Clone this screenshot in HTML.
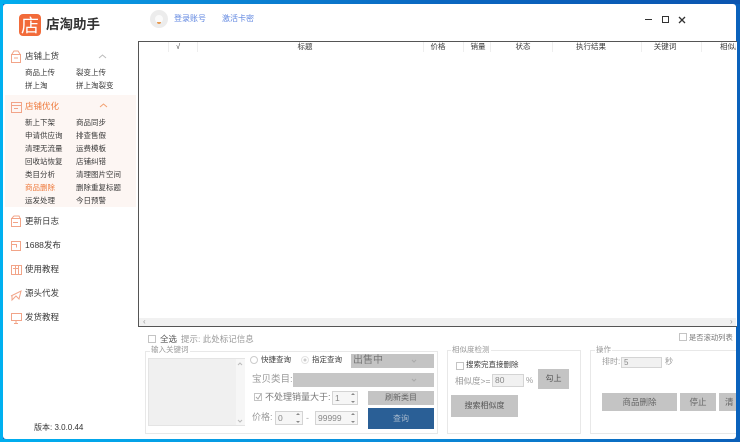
<!DOCTYPE html>
<html><head><meta charset="utf-8"><style>
html,body{margin:0;padding:0;width:740px;height:442px;overflow:hidden;background:#0a62bc}
body{position:relative;font-family:"Liberation Sans","Noto Sans CJK SC",sans-serif;color:#333}
.a{position:absolute;white-space:nowrap}
.t{position:absolute;white-space:nowrap;font-size:7.5px;line-height:12px;color:#3a3a3a}
.m{position:absolute;white-space:nowrap;font-size:8.5px;line-height:14px;color:#3a3a3a}
.g{position:absolute;white-space:nowrap;font-size:9px;line-height:14px;color:#999}
.h{position:absolute;white-space:nowrap;font-size:7.5px;line-height:12px;color:#3a3a3a;top:41px;transform:translateX(-50%)}
.s{position:absolute;top:42px;width:1px;height:10px;background:#eee}
.box{position:absolute;border:1px solid #e8e8e8;box-sizing:border-box}
.btn{position:absolute;background:#c4c4c4;color:#666;font-size:8.5px;text-align:center;box-sizing:border-box}
.inp{position:absolute;background:#f1f1f1;border:1px solid #d4d4d4;box-sizing:border-box;font-size:8.5px;color:#888;padding-left:2px}
.ck{position:absolute;width:8px;height:8px;border:1px solid #c4c4c4;background:#fff;box-sizing:border-box}
svg{position:absolute;overflow:visible}
</style></head><body>
<div class="a" style="left:0;top:0;width:740px;height:4px;background:linear-gradient(90deg,#00aeef 0,#0a8fdc 20%,#0a66c0 60%,#0b55b0 100%)"></div>
<div class="a" style="left:0;top:0;width:3px;height:442px;background:#00b0f0"></div>
<div class="a" style="left:0;top:439px;width:740px;height:3px;background:linear-gradient(90deg,#00aeef 0,#0a8fdc 50%,#0b5fb8 100%)"></div>
<div class="a" style="left:3px;top:4px;width:733px;height:435px;background:#fff;border-radius:3px"></div>

<!-- Logo -->
<div class="a" style="left:19px;top:14px;width:22px;height:22px;border-radius:4px;background:#f26b3a"></div>
<div class="a" style="left:19px;top:14px;width:22px;height:22px;color:#fff;font-size:18px;line-height:22px;text-align:center;font-family:'Noto Sans CJK SC',sans-serif">店</div>
<div class="a" style="left:46px;top:15px;font-size:13.500px;line-height:20px;font-weight:bold;color:#333">店淘助手</div>

<!-- Sidebar -->
<div class="a" style="left:5px;top:95px;width:131px;height:112px;background:#fdf6f3"></div>
<svg style="left:0;top:0" width="138" height="340" fill="none" stroke="#f2a488" stroke-width="1">
<path d="M11.500 54.500h9v8h-9zM12 54l2-3h4l2 3M14 58h4"/>
<path d="M11.500 102.500h10v10h-10zM11.500 105.500h10M14 108.500h4"/>
<path d="M11.500 218.500h9v8h-9zM12 218l2-2h5l1 2M13 222.500h5"/>
<path d="M11.500 241.500h9v9h-9zM11.500 244.500h5v3"/>
<path d="M11.500 265.500h10v9h-10zM15.500 265.500v9M18.500 265.500v9M13 268.500h6"/>
<path d="M11 296l10-5-2 8-3-3-4 4v-4"/>
<path d="M11.500 313.500h10v7h-10zM14 323.500h4M16 320.500v3"/>
<path d="M99 58l3.500-3 3.500 3" stroke="#bbb"/>
<path d="M100 107l3.500-3 3.500 3" stroke="#f2a070"/>
</svg>
<div class="m" style="left:25px;top:49px">店铺上货</div>
<div class="t" style="left:25px;top:67px">商品上传</div><div class="t" style="left:76px;top:67px">裂变上传</div>
<div class="t" style="left:25px;top:80px">拼上淘</div><div class="t" style="left:76px;top:80px">拼上淘裂变</div>

<div class="m" style="left:25px;top:99px;color:#ee7a3c">店铺优化</div>
<div class="t" style="left:25px;top:117px">新上下架</div><div class="t" style="left:76px;top:117px">商品同步</div>
<div class="t" style="left:25px;top:130px">申请供应询</div><div class="t" style="left:76px;top:130px">排查售假</div>
<div class="t" style="left:25px;top:143px">清理无流量</div><div class="t" style="left:76px;top:143px">运费模板</div>
<div class="t" style="left:25px;top:156px">回收站恢复</div><div class="t" style="left:76px;top:156px">店铺纠错</div>
<div class="t" style="left:25px;top:169px">类目分析</div><div class="t" style="left:76px;top:169px">清理图片空间</div>
<div class="t" style="left:25px;top:182px;color:#ee7a3c">商品删除</div><div class="t" style="left:76px;top:182px">删除重复标题</div>
<div class="t" style="left:25px;top:195px">运发处理</div><div class="t" style="left:76px;top:195px">今日预警</div>

<div class="m" style="left:25px;top:214px">更新日志</div>
<div class="m" style="left:25px;top:238px">1688发布</div>
<div class="m" style="left:25px;top:262px">使用教程</div>
<div class="m" style="left:25px;top:286px">源头代发</div>
<div class="m" style="left:25px;top:310px">发货教程</div>
<div class="m" style="left:34px;top:421px;font-size:8px;color:#333">版本: 3.0.0.44</div>

<!-- Top bar -->
<div class="a" style="left:150px;top:10px;width:18px;height:18px;border-radius:50%;background:#ececec"></div>
<div class="a" style="left:155px;top:15px;width:8px;height:8px;border-radius:50%;background:#fafafa"></div>
<div class="a" style="left:157px;top:22px;width:4px;height:2px;background:#e89a50;border-radius:0 0 3px 3px"></div>
<div class="t" style="left:174px;top:13px;color:#5f86e0;font-size:8px">登录账号</div>
<div class="t" style="left:222px;top:13px;color:#5f86e0;font-size:8px">激活卡密</div>
<svg style="left:0;top:0" width="740" height="30" fill="none" stroke="#333" stroke-width="1">
<path d="M645 19.500h7"/>
<path d="M662.500 16.500h6v6h-6z"/>
<path d="M679 17l6 6M685 17l-6 6" stroke-width="1.300"/>
</svg>

<!-- Table -->
<div class="a" style="left:138px;top:41px;width:599px;height:286px;border:1px solid #555;border-right:0;box-sizing:border-box;background:#fff"></div>
<div class="s" style="left:168px"></div><div class="s" style="left:197px"></div><div class="s" style="left:423px"></div><div class="s" style="left:463px"></div><div class="s" style="left:490px"></div><div class="s" style="left:552px"></div><div class="s" style="left:641px"></div><div class="s" style="left:701px"></div>
<div class="h" style="left:178px">√</div>
<div class="h" style="left:305px">标题</div>
<div class="h" style="left:438px">价格</div>
<div class="h" style="left:478px">销量</div>
<div class="h" style="left:523px">状态</div>
<div class="h" style="left:591px">执行结果</div>
<div class="h" style="left:665px">关键词</div>
<div class="h" style="transform:none;left:720px;width:16px;overflow:hidden">相似度</div>
<div class="a" style="left:139px;top:318px;width:597px;height:8px;background:#f1f1f1"></div>
<div class="a" style="left:143px;top:317px;font-size:8px;line-height:10px;color:#999">‹</div>
<div class="a" style="left:730px;top:317px;font-size:8px;line-height:10px;color:#999">›</div>

<!-- Bottom -->
<div class="ck" style="left:148px;top:335px"></div>
<div class="a" style="left:160px;top:332px;font-size:8.500px;line-height:14px;color:#555">全选</div>
<div class="a" style="left:181px;top:332px;font-size:8.500px;line-height:14px;color:#999">提示: 此处标记信息</div>
<div class="ck" style="left:679px;top:333px"></div>
<div class="a" style="left:689px;top:331px;font-size:7.300px;line-height:14px;color:#777">是否滚动列表</div>

<div class="box" style="left:145px;top:351px;width:293px;height:83px"></div>
<div class="a" style="left:150px;top:344px;background:#fff;padding:0 1px;font-size:7.500px;line-height:12px;color:#999">输入关键词</div>
<div class="a" style="left:148px;top:358px;width:97px;height:68px;background:#f0f0f0;border:1px solid #e4e4e4;box-sizing:border-box"></div>
<div class="a" style="left:236px;top:359px;width:9px;height:66px;background:#f6f6f6"></div>
<svg style="left:0;top:0" width="740" height="442" fill="none" stroke="#bbb"><path d="M238 365l2-2 2 2M238 420l2 2 2-2"/>
<circle cx="254" cy="360" r="3.500" stroke="#ccc"/><circle cx="305" cy="360" r="3.500" stroke="#e4e4e4"/><circle cx="305" cy="360" r="1.500" fill="#ccc" stroke="none"/></svg>
<div class="a" style="left:261px;top:354px;font-size:7.500px;line-height:12px;color:#3a3a3a">快捷查询</div>
<div class="a" style="left:312px;top:354px;font-size:7.500px;line-height:12px;color:#3a3a3a">指定查询</div>
<div class="a" style="left:351px;top:354px;width:83px;height:14px;background:#c4c4c4;color:#777;font-size:10px;line-height:14px;padding-left:2px;box-sizing:border-box">出售中</div>
<div class="g" style="left:252px;top:373px;font-size:9.500px">宝贝类目:</div>
<div class="a" style="left:293px;top:373px;width:141px;height:14px;background:#c6c6c6"></div>
<div class="ck" style="left:254px;top:393px;background:none"></div>
<svg style="left:0;top:0" width="740" height="442" fill="none" stroke="#aaa"><path d="M256 397l2 2 3-5"/><path d="M412 360l2 2 2-2M412 379l2 2 2-2"/></svg>
<div class="a" style="left:265px;top:390px;font-size:9px;line-height:14px;color:#777">不处理销量大于:</div>
<div class="inp" style="left:332px;top:391px;width:26px;height:14px;line-height:12px;background:#f6f6f6">1</div>
<div class="g" style="left:252px;top:410px;font-size:9px">价格:</div>
<div class="inp" style="left:275px;top:411px;width:28px;height:14px;line-height:12px;background:#f6f6f6">0</div>
<div class="a" style="left:306px;top:411px;font-size:9px;line-height:14px;color:#aaa">-</div>
<div class="inp" style="left:315px;top:411px;width:43px;height:14px;line-height:12px;background:#f6f6f6">99999</div>
<svg style="left:0;top:0" width="740" height="442" fill="#888"><path d="M351 395l2-2 2 2zM351 401l2 2 2-2zM296 415l2-2 2 2zM296 421l2 2 2-2zM351 415l2-2 2 2zM351 421l2 2 2-2zM654 360l2-2 2 2zM654 365l2 2 2-2z"/></svg>
<div class="btn" style="left:368px;top:391px;width:66px;height:14px;line-height:14px;font-size:8px">刷新类目</div>
<div class="btn" style="left:368px;top:408px;width:66px;height:21px;line-height:21px;background:#2a5f96;color:#a6b8cc;font-size:8px">查询</div>

<div class="box" style="left:447px;top:350px;width:134px;height:84px"></div>
<div class="a" style="left:451px;top:344px;background:#fff;padding:0 1px;font-size:7.500px;line-height:12px;color:#999">相似度检测</div>
<div class="ck" style="left:456px;top:362px"></div>
<div class="a" style="left:466px;top:359px;font-size:7.500px;line-height:12px;color:#3a3a3a">搜索完直接删除</div>
<div class="g" style="left:455px;top:374px;font-size:8.500px">相似度&gt;=</div>
<div class="inp" style="left:492px;top:374px;width:32px;height:13px;line-height:11px">80</div>
<div class="a" style="left:526px;top:375px;font-size:8px;line-height:12px;color:#999">%</div>
<div class="btn" style="left:538px;top:369px;width:31px;height:20px;line-height:20px;color:#555;font-size:8px">勾上</div>
<div class="btn" style="left:451px;top:395px;width:67px;height:22px;line-height:22px;color:#555;font-size:8px">搜索相似度</div>

<div class="box" style="left:590px;top:350px;width:146px;height:84px;border-right:0"></div>
<div class="a" style="left:595px;top:344px;background:#fff;padding:0 1px;font-size:7.500px;line-height:12px;color:#999">操作</div>
<div class="g" style="left:602px;top:355px;font-size:8px">排时:</div>
<div class="inp" style="left:621px;top:357px;width:41px;height:11px;line-height:9px;font-size:8px">5</div>
<div class="a" style="left:665px;top:355px;font-size:8px;line-height:14px;color:#999">秒</div>
<div class="btn" style="left:602px;top:393px;width:75px;height:18px;line-height:18px;color:#666;font-size:8.500px">商品删除</div>
<div class="btn" style="left:680px;top:393px;width:36px;height:18px;line-height:18px;color:#666;font-size:8.500px">停止</div>
<div class="btn" style="left:719px;top:393px;width:17px;height:18px;line-height:18px;color:#666;font-size:8.500px;text-align:left;padding-left:6px;overflow:hidden">清</div>
</body></html>
